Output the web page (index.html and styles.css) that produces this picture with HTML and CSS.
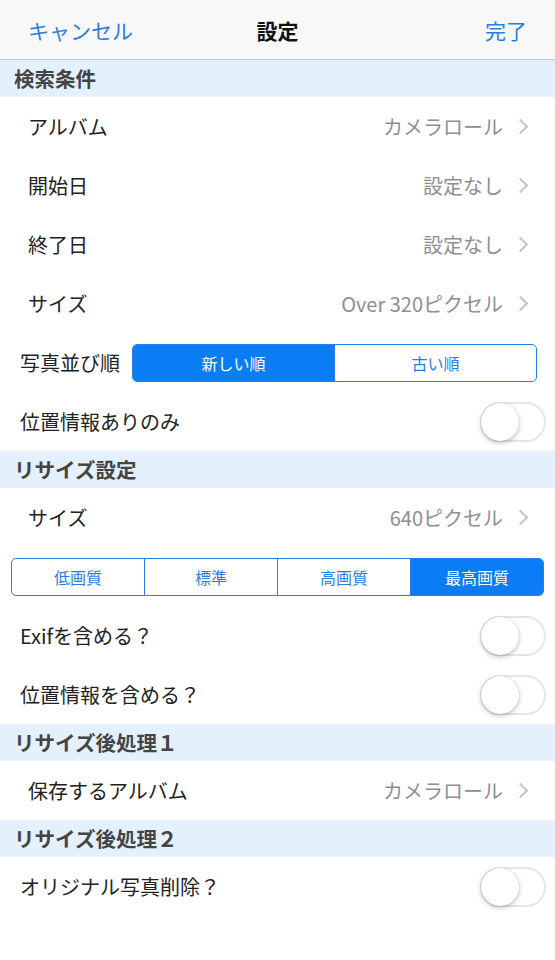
FILE: index.html
```html
<!DOCTYPE html>
<html lang="ja">
<head>
  <meta charset="UTF-8">
  <meta name="viewport" content="width=device-width, initial-scale=1.0">
  <title>設定</title>
  <link rel="stylesheet" href="styles.css">
</head>
<body>

  <div class="navbar">
    <span class="nav-button">キャンセル</span>
    <span class="nav-title">設定</span>
    <span class="nav-button">完了</span>
  </div>

  <div class="section-header">検索条件</div>
  <div class="row row-link">
    <span class="label">アルバム</span>
    <span class="value">カメラロール</span>
    <span class="chevron"></span>
  </div>
  <div class="row row-link">
    <span class="label">開始日</span>
    <span class="value">設定なし</span>
    <span class="chevron"></span>
  </div>
  <div class="row row-link">
    <span class="label">終了日</span>
    <span class="value">設定なし</span>
    <span class="chevron"></span>
  </div>
  <div class="row row-link">
    <span class="label">サイズ</span>
    <span class="value">Over 320ピクセル</span>
    <span class="chevron"></span>
  </div>
  <div class="row row-plain row-sort">
    <span class="label">写真並び順</span>
    <div class="segmented segmented-sort">
      <span class="segment selected">新しい順</span>
      <span class="segment">古い順</span>
    </div>
  </div>
  <div class="row row-plain">
    <span class="label">位置情報ありのみ</span>
    <span class="switch"></span>
  </div>

  <div class="section-header">リサイズ設定</div>
  <div class="row row-link">
    <span class="label">サイズ</span>
    <span class="value">640ピクセル</span>
    <span class="chevron"></span>
  </div>
  <div class="row row-segment">
    <div class="segmented segmented-quality">
      <span class="segment">低画質</span>
      <span class="segment">標準</span>
      <span class="segment">高画質</span>
      <span class="segment selected">最高画質</span>
    </div>
  </div>
  <div class="row row-plain">
    <span class="label">Exifを含める？</span>
    <span class="switch"></span>
  </div>
  <div class="row row-plain">
    <span class="label">位置情報を含める？</span>
    <span class="switch"></span>
  </div>

  <div class="section-header">リサイズ後処理１</div>
  <div class="row row-link">
    <span class="label">保存するアルバム</span>
    <span class="value">カメラロール</span>
    <span class="chevron"></span>
  </div>

  <div class="section-header">リサイズ後処理２</div>
  <div class="row row-plain">
    <span class="label">オリジナル写真削除？</span>
    <span class="switch"></span>
  </div>

</body>
</html>
```

FILE: styles.css
```css
body {
  margin: 0;
  background-color: white;
  font-family: "Noto Sans CJK JP", "Noto Sans", sans-serif;
  color: #222;
  width: 555px;
}

.navbar {
  height: 60px;
  background-color: #f8f8f8;
  border-bottom: 1px solid #c8c8cc;
  display: flex;
  align-items: center;
  justify-content: space-between;
  padding: 0 28px;
  box-sizing: border-box;
}

.nav-button {
  color: #2a7de1;
  font-size: 21px;
  width: 120px;
}

.nav-button:last-child {
  text-align: right;
}

.nav-title {
  font-size: 21px;
  font-weight: bold;
  color: #111;
}

.section-header {
  height: 37px;
  line-height: 37px;
  background-color: #e4f0fc;
  padding-left: 14px;
  font-size: 20.5px;
  font-weight: bold;
  color: #444;
}

.row {
  height: 59px;
  display: flex;
  align-items: center;
  box-sizing: border-box;
  font-size: 20px;
}

.row-link {
  padding: 0 29px 0 28px;
}

.row-plain {
  padding: 0 9px 0 20px;
}

.row-sort {
  padding-right: 18px;
}

.row-segment {
  padding: 0 11px;
}

.label {
  flex: 1;
  color: #222;
}

.row-plain .label {
  flex: none;
  margin-right: 12px;
}

.row-plain .switch {
  margin-left: auto;
}

.value {
  color: #8e8e93;
}

/* chevron drawn with two borders */
.chevron {
  width: 9px;
  height: 9px;
  border-top: 2px solid #c4c4c8;
  border-right: 2px solid #c4c4c8;
  transform: rotate(45deg);
  margin-left: 12px;
}

.segmented {
  display: flex;
  height: 38px;
  border: 1px solid #2a7de1;
  border-radius: 5px;
  overflow: hidden;
  box-sizing: border-box;
}

.segmented-sort {
  flex: 1;
}

.segmented-quality {
  flex: 1;
}

.segment {
  flex: 1;
  display: flex;
  align-items: center;
  justify-content: center;
  font-size: 16px;
  color: #2a7de1;
  border-left: 1px solid #2a7de1;
}

.segment:first-child {
  border-left: none;
}

.segment.selected {
  background-color: #0a7cf5;
  color: white;
}

.switch {
  position: relative;
  width: 66px;
  height: 40px;
  border: 2px solid #e6e6e6;
  border-radius: 20px;
  box-sizing: border-box;
  background-color: white;
}

.switch::after {
  content: "";
  position: absolute;
  left: -1px;
  top: -1px;
  width: 38px;
  height: 38px;
  border-radius: 50%;
  background-color: white;
  box-shadow: 0 2px 5px rgba(0, 0, 0, 0.25), 0 0 1px rgba(0, 0, 0, 0.2);
}
```
